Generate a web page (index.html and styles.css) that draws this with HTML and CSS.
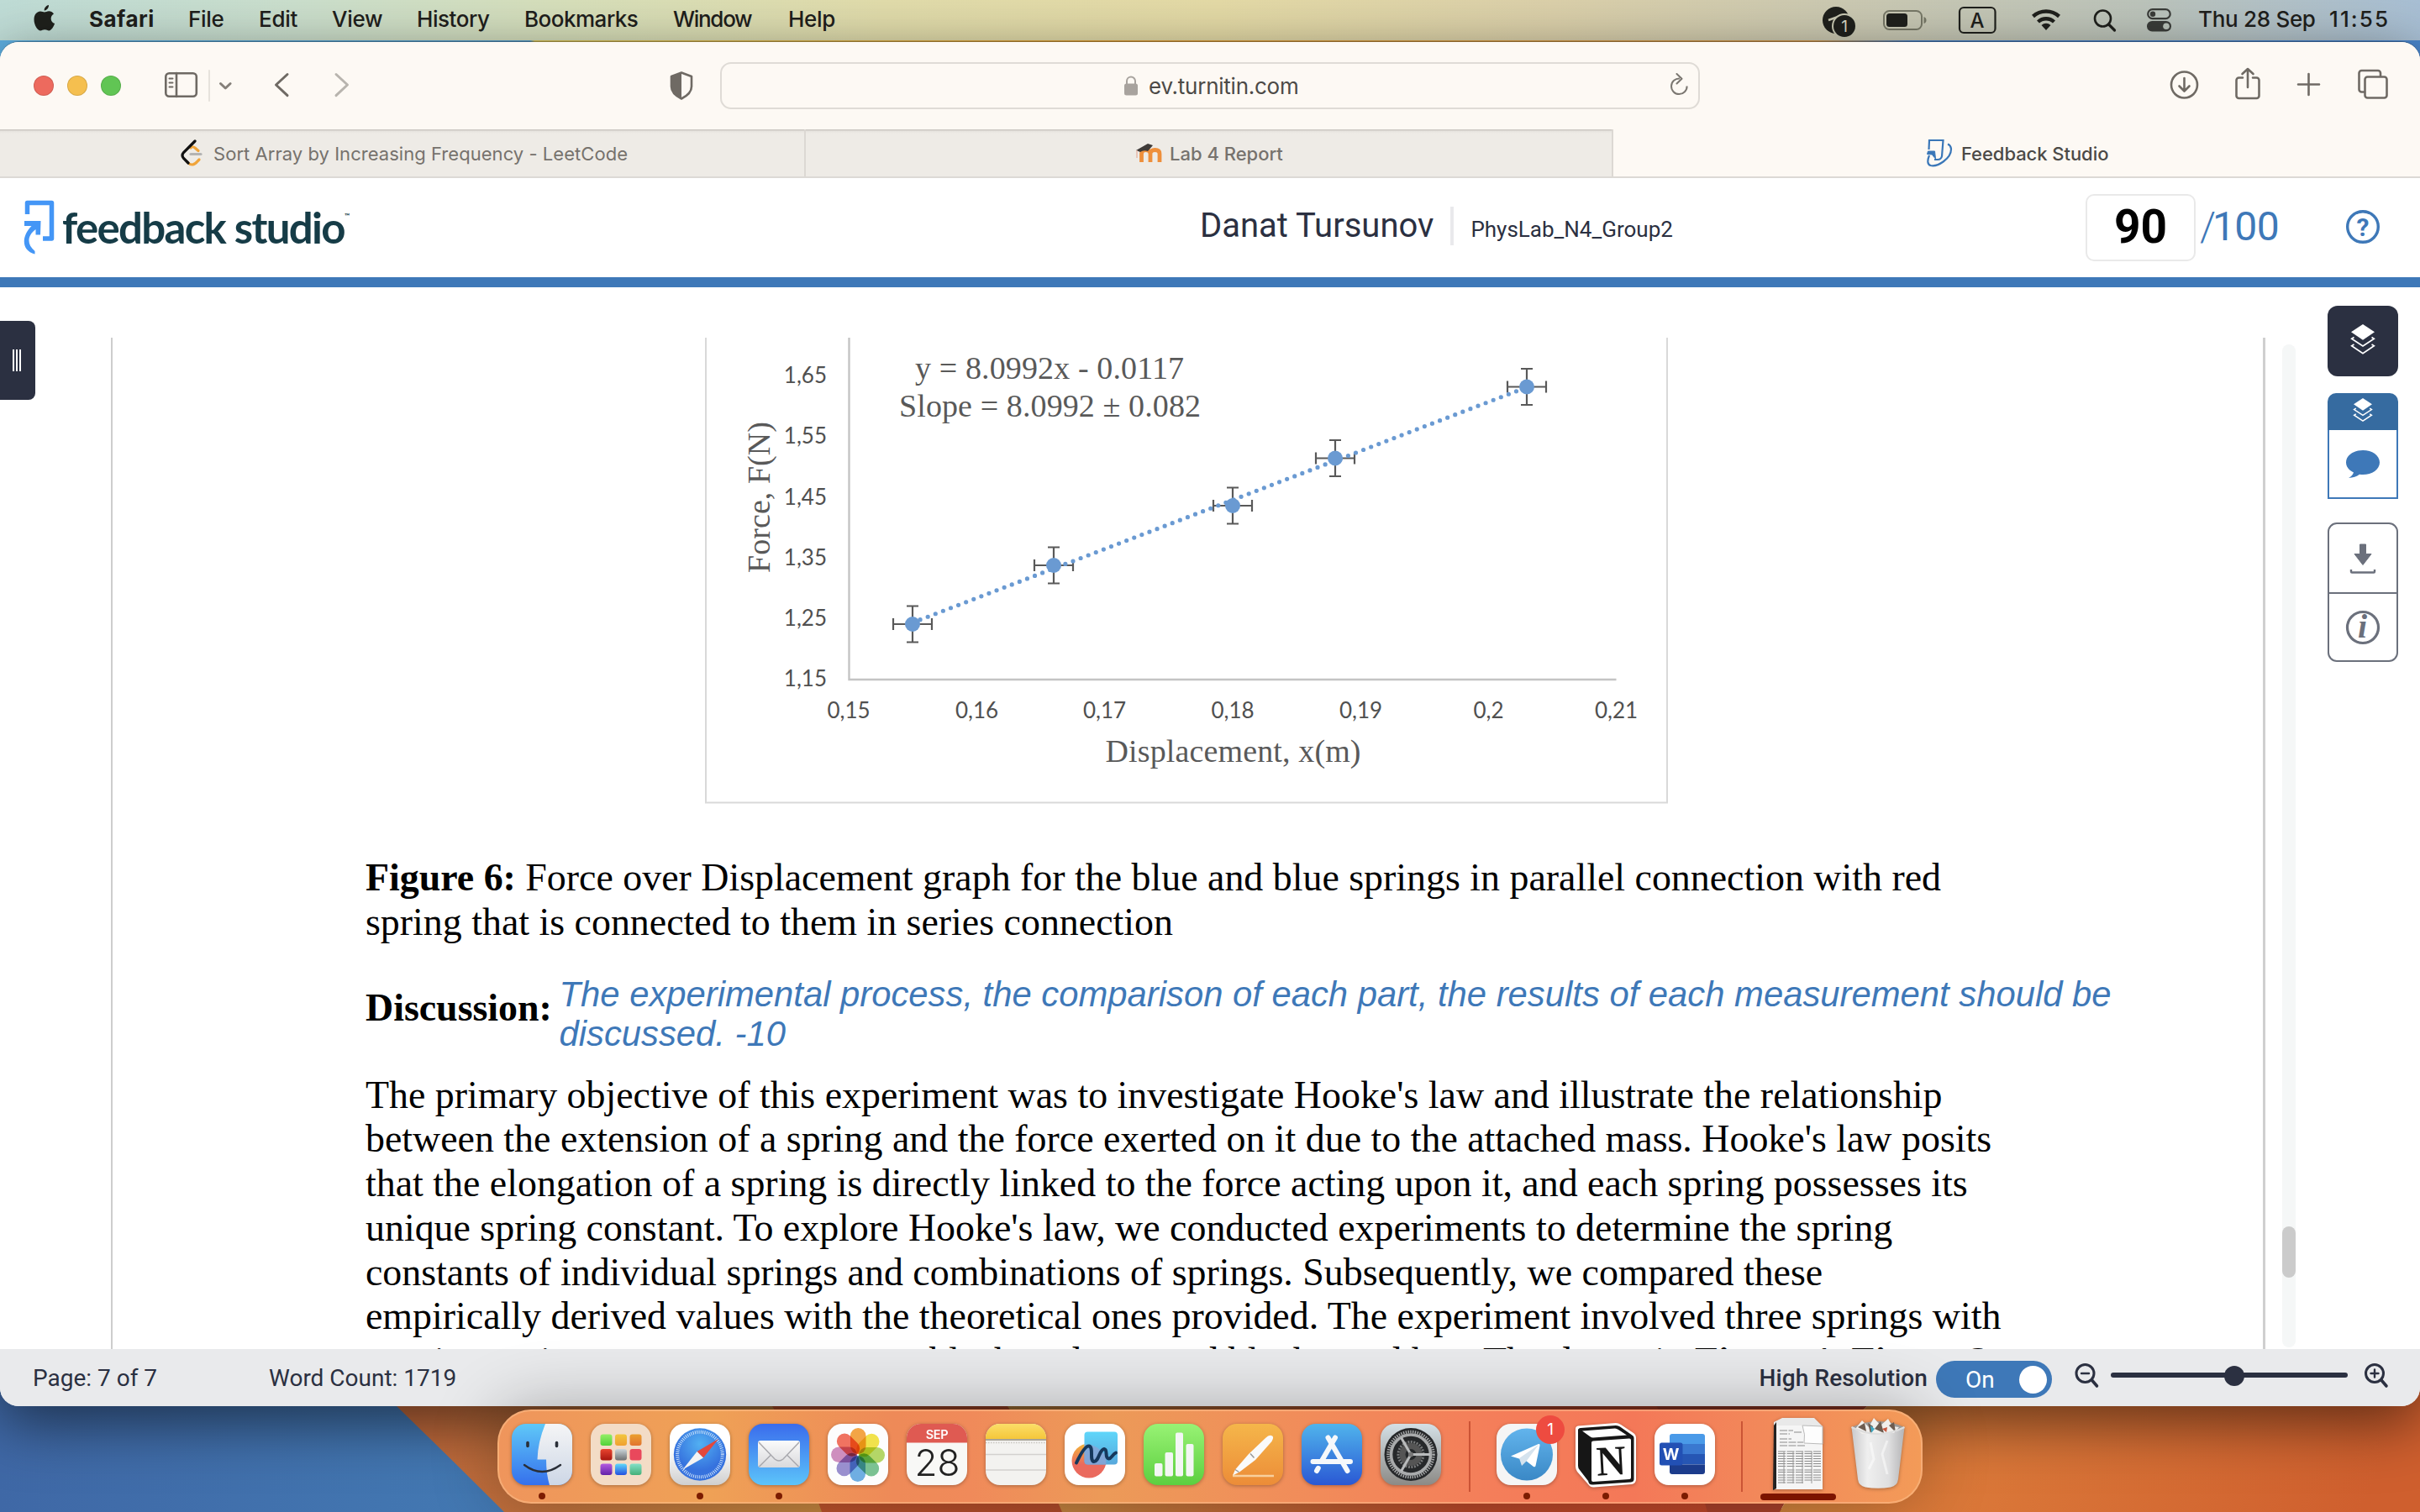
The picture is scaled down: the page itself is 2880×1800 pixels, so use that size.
FILE: index.html
```html
<!DOCTYPE html>
<html lang="en">
<head>
<meta charset="utf-8">
<title>Feedback Studio</title>
<link rel="stylesheet" href="styles.css">
</head>
<body>
<svg class="wallpaper" width="2880" height="1800" viewBox="0 0 2880 1800" aria-hidden="true">
  <defs>
    <linearGradient id="wTop" x1="0" x2="1"><stop offset="0" stop-color="#5fb0e2"/><stop offset=".219" stop-color="#5a9fcb"/><stop offset=".221" stop-color="#d8c45c"/><stop offset=".45" stop-color="#dfa23c"/><stop offset=".75" stop-color="#cf9850"/><stop offset=".79" stop-color="#4d83c4"/><stop offset="1" stop-color="#4a86cc"/></linearGradient>
    <linearGradient id="wBlue" x1="0" x2="1"><stop offset="0" stop-color="#3f68a6"/><stop offset="1" stop-color="#4379b3"/></linearGradient>
    <linearGradient id="wLeft" x1="0" x2="1"><stop offset="0" stop-color="#c26c44"/><stop offset=".45" stop-color="#c0693c"/><stop offset="1" stop-color="#c58d40"/></linearGradient>
    <linearGradient id="wMid" x1="0" x2="1"><stop offset="0" stop-color="#c0552c"/><stop offset="1" stop-color="#b04a2a"/></linearGradient>
    <linearGradient id="wMid2" x1="0" x2="1"><stop offset="0" stop-color="#c58b42"/><stop offset=".6" stop-color="#b9482a"/><stop offset="1" stop-color="#bf4629"/></linearGradient>
    <linearGradient id="wRight" x1="0" x2="1" y1="0" y2=".1"><stop offset="0" stop-color="#c8853c"/><stop offset=".3" stop-color="#dc7b3a"/><stop offset="1" stop-color="#cf5f2e"/></linearGradient>
  </defs>
  <rect width="2880" height="200" fill="url(#wTop)"/>
  <rect y="1600" width="1100" height="200" fill="url(#wLeft)"/>
  <path d="M0 1600H420L472 1674Q540 1740 600 1800H0Z" fill="url(#wBlue)"/>
  <path d="M910 1660Q950 1720 978 1800H1300V1660Z" fill="url(#wMid)"/>
  <path d="M1190 1660Q1230 1720 1264 1800H2120V1660Z" fill="url(#wMid2)"/>
  <path d="M1960 1660Q2010 1720 2032 1800H2118Q2160 1720 2240 1660Z" fill="#a8402a"/>
  <path d="M2240 1660Q2160 1720 2118 1800H2880V1600H2240Z" fill="url(#wRight)"/>
</svg>

<header class="menubar">
  <svg class="apple" width="26" height="32" viewBox="0 0 26 32"><path d="M18 0c.3 3-2.400 6.500-5.300 6.600C12.300 3.700 15 .5 18 0ZM12.900 8.600c1.200 0 3-1.300 5.400-1.300 2 0 4.200 1 5.700 3.200-5 3-4.100 9.700 1.100 11.600C24 25.300 21.300 30.500 18.300 30.500c-1.900 0-2.600-1.200-5-1.200s-3.300 1.200-5.100 1.200C4.500 30.500.5 23.600.5 17.300.5 11 4.400 7.600 8 7.600c2.200 0 3.800 1 4.900 1Z"/></svg>
  <nav class="menus">
    <span class="m-app">Safari</span><span class="m-file">File</span><span class="m-edit">Edit</span><span class="m-view">View</span><span class="m-hist">History</span><span class="m-book">Bookmarks</span><span class="m-wind">Window</span><span>Help</span>
  </nav>
  <svg class="status" width="420" height="48" viewBox="2165 0 420 48">
    <circle cx="2184" cy="24" r="16" fill="#1f201c"/><path d="M2175 24l17-6-4 9" fill="none" stroke="#c9c8b3" stroke-width="2.500"/>
    <circle cx="2194" cy="31" r="15" fill="#c9c9b3"/><circle cx="2194" cy="31" r="13" fill="#1f201c"/>
    <text x="2194" y="38" font-size="19" fill="#d9d8c4" text-anchor="middle">1</text>
    <rect x="2241" y="13" width="45" height="22" rx="6.500" fill="none" stroke="#777867" stroke-width="2"/><rect x="2244" y="16" width="25" height="16" rx="3.500" fill="#1f201c"/><path d="M2288.500 20q3 1 3 4t-3 4Z" fill="#777867"/>
    <rect x="2331" y="9" width="42.500" height="30" rx="5" fill="none" stroke="#1f201c" stroke-width="2.200"/><text x="2352" y="32.500" font-size="24" font-weight="500" fill="#1f201c" text-anchor="middle">A</text>
    <g fill="none" stroke="#1f201c" stroke-width="4.400"><path d="M2418.500 19.500a23 23 0 0 1 31 0"/><path d="M2424.500 26a14 14 0 0 1 19 0"/></g><path d="M2434 36l-5.500-6a8 8 0 0 1 11 0Z" fill="#1f201c"/>
    <circle cx="2501.500" cy="22" r="9.500" fill="none" stroke="#1f201c" stroke-width="2.600"/><path d="M2508.500 29l7 7" stroke="#1f201c" stroke-width="3.200" stroke-linecap="round"/>
    <rect x="2555.200" y="11.200" width="26.500" height="11" rx="5.500" fill="none" stroke="#3a3c39" stroke-width="2.200"/><circle cx="2561" cy="16.700" r="3.200" fill="#3a3c39"/><rect x="2554" y="25" width="29" height="12.500" rx="6.200" fill="#3a3c39"/><circle cx="2577" cy="31.200" r="3.800" fill="#b9c2b9"/>
  </svg>
  <span class="clock"><span class="date">Thu 28 Sep</span><span class="time">11:55</span></span>
</header>

<main class="window">
  <div class="toolbar">
    <span class="lights"><i class="red"></i><i class="amber"></i><i class="green"></i></span>
    <svg class="tools-left" width="222" height="56" viewBox="194 74 222 56" fill="none" stroke="#6f6a64" stroke-width="2.600" stroke-linecap="round" stroke-linejoin="round">
      <rect x="197.300" y="87.300" width="36.500" height="27.500" rx="4"/><path d="M210 87v28"/><path d="M201.500 93.500h4M201.500 98.500h4M201.500 103.500h4" stroke-width="2"/>
      <path d="M249 84v36" stroke="#e6e2dc" stroke-width="2"/><path d="M262.500 99.500l5.800 5.500 5.800-5.500" stroke="#85807a" stroke-width="3"/>
      <path d="M342 88.500l-13.500 12.500 13.500 12.700" stroke-width="3"/><path d="M400 88.500l13.500 12.500-13.500 12.700" stroke="#b8b4ae" stroke-width="3"/>
    </svg>
    <svg class="shield" width="28" height="34" viewBox="0 0 28 34"><path d="M14 1.500l12 4.500v12c0 6-5 11-12 14.500C7 29 2 24 2 18V6Z" fill="none" stroke="#6f6a64" stroke-width="2.600" stroke-linejoin="round"/><path d="M14 1.500v31C7 29 2 24 2 18V6Z" fill="#6f6a64"/></svg>
    <div class="address">
      <svg width="16" height="24" viewBox="0 0 16 24"><rect y="9.500" width="16" height="14" rx="2.500" fill="#a8a39e"/><path d="M3 10V6.500a5 5 0 0 1 10 0V10" fill="none" stroke="#a8a39e" stroke-width="2"/></svg>
      <span class="host">ev.turnitin.com</span>
      <svg class="reload" width="24" height="28" viewBox="0 0 24 28" fill="none" stroke="#7b7771" stroke-width="2"><path d="M13 6.500a9.300 9.300 0 1 0 8.600 9"/><path d="M9.500 1l6 5.700-6 5.800" stroke-linecap="round" stroke-linejoin="round"/></svg>
    </div>
    <svg class="tools-right" width="264" height="56" viewBox="2582 74 264 56" fill="none" stroke="#6f6a64" stroke-width="2.600" stroke-linecap="round" stroke-linejoin="round">
      <circle cx="2599.500" cy="101" r="15.500"/><path d="M2599.500 93v15M2593.500 102.500l6 6 6-6"/>
      <path d="M2669 92.500h-4.500a3 3 0 0 0-3 3v18.500a3 3 0 0 0 3 3h21a3 3 0 0 0 3-3V95.500a3 3 0 0 0-3-3h-4.500M2675 104V82.500M2668.500 88l6.500-6 6.500 6"/>
      <path d="M2735 100.500h25M2747.500 88v25"/>
      <path d="M2814 109.500h-3.500a3 3 0 0 1-3-3V87a3 3 0 0 1 3-3h19.500a3 3 0 0 1 3 3v3.500"/><rect x="2814.500" y="91.500" width="26" height="25" rx="3"/>
    </svg>
  </div>

  <div class="tabs">
    <div class="tab"><svg width="30" height="32" viewBox="0 0 30 32" fill="none" stroke-linecap="round" stroke-width="3.200"><path d="M13 10q2-2.500 5 0l4 3.500M9 27q6 6.500 12-1l2-2" stroke="#f0a43a"/><path d="M13 17.500h12" stroke="#b3b3b3"/><path d="M18 2L4.500 15.500q-3 3.500 0 7L10 28" stroke="#111"/></svg><span class="t-leet">Sort Array by Increasing Frequency - LeetCode</span></div>
    <div class="tab"><svg width="32" height="24" viewBox="0 0 32 24"><path d="M6.500 23V13q0-4.500 5-4.500T17 13v10M17 23V13q0-4.500 5.500-4.500T28 13v10" fill="none" stroke="#ee8f3b" stroke-width="4.800"/><path d="M0 9L14 1l6 2-6 7q-5-2-9 1Z" fill="#3f3b39"/><path d="M1 9v9" stroke="#e7b9a8" stroke-width="1.500"/></svg><span class="t-lab">Lab 4 Report</span></div>
    <div class="tab active"><svg width="32" height="34" viewBox="0 0 32 34" fill="none" stroke="#3a77b8" stroke-width="2.200"><path d="M3.500 13L4 2h16.500L19 21q-1 4-5 4h-4"/><path d="M2.500 15l8 0 1 9q-3-3-4-5l-6-.500Z" fill="#3a77b8" stroke-width="1"/><path d="M4 20q-4 10 1.500 12c8 2 25-8 24.500-20q-.5-4-4-5.500"/></svg><span class="t-feed">Feedback Studio</span></div>
  </div>

  <div class="appbar">
    <div class="brand">
      <svg width="40" height="66" viewBox="0 0 40 66"><path d="M5.500 17V3.500H34.500V46H24" fill="none" stroke="#4496f6" stroke-width="5.500" stroke-linejoin="round"/><path d="M2 25h19.500l-.5 16.500h-5.500V35C6 42 4 52 14.500 61v3.500C-2 60-1.500 43 10.500 31H2Z" fill="#4496f6"/></svg>
      <span class="word">feedback studio</span><span class="tm">™</span>
    </div>
    <div class="paper"><span class="author">Danat Tursunov</span><i></i><span class="title">PhysLab_N4_Group2</span></div>
    <div class="grade"><span class="score">90</span><span class="outof"><b>/</b>100</span></div>
    <svg class="help" width="42" height="42" viewBox="0 0 42 42"><circle cx="21" cy="21" r="18.300" fill="none" stroke="#3e78b8" stroke-width="3.400"/><text x="21" y="31.500" text-anchor="middle" font-size="30" font-weight="700">?</text></svg>
  </div>

  <div class="viewer">
    <div class="handle"><i></i><i></i><i></i></div>
    <article class="page">
      <svg class="chart" width="1148" height="555" viewBox="838 402 1148 555">
        <path d="M840 402V955.500H1984V402" fill="none" stroke="#d9d9d9" stroke-width="2"/>
        <path d="M1010.500 402V809H1923.500" fill="none" stroke="#c4c4c4" stroke-width="2.400"/>
        <g class="ticks" text-anchor="end"><text x="984" y="456">1,65</text><text x="984" y="528">1,55</text><text x="984" y="600.500">1,45</text><text x="984" y="672.500">1,35</text><text x="984" y="745">1,25</text><text x="984" y="817">1,15</text></g>
        <g class="ticks" text-anchor="middle"><text x="1010" y="854.500">0,15</text><text x="1162.500" y="854.500">0,16</text><text x="1314.500" y="854.500">0,17</text><text x="1467" y="854.500">0,18</text><text x="1619.500" y="854.500">0,19</text><text x="1771.500" y="854.500">0,2</text><text x="1923.500" y="854.500">0,21</text></g>
        <g class="labels"><text x="1089" y="450.500" textLength="320">y = 8.0992x - 0.0117</text><text x="1070" y="495.500" textLength="359">Slope = 8.0992 ± 0.082</text><text x="1315.500" y="907" textLength="304">Displacement, x(m)</text><text transform="translate(916 682) rotate(-90)" textLength="180">Force, F(N)</text></g>
        <g stroke="#595959" stroke-width="2.200" fill="none">
          <path d="M1063 743h46M1086 721.500v43M1063 736v14M1109 736v14M1079 721.500h14M1079 764.500h14"/>
          <path d="M1231 673h46M1254 651.500v43M1231 666v14M1277 666v14M1247 651.500h14M1247 694.500h14"/>
          <path d="M1444 602h46M1467 580.500v43M1444 595v14M1490 595v14M1460 580.500h14M1460 623.500h14"/>
          <path d="M1566 545.500h46M1589 524v43M1566 538.500v14M1612 538.500v14M1582 524h14M1582 567h14"/>
          <path d="M1794 460.500h46M1817 439v43M1794 453.500v14M1840 453.500v14M1810 439h14M1810 482h14"/>
        </g>
        <path d="M1086 741.200L1816.700 461.100" stroke="#6a9ad2" stroke-width="5.200" stroke-linecap="round" stroke-dasharray="0 9.740"/>
        <g fill="#6a9ad2"><circle cx="1086" cy="743" r="9"/><circle cx="1254" cy="673" r="9"/><circle cx="1467" cy="602" r="9"/><circle cx="1589" cy="545.500" r="9"/><circle cx="1817" cy="460.500" r="9"/></g>
      </svg>
      <p class="caption"><b>Figure 6:</b> Force over Displacement graph for the blue and blue springs in parallel connection with red<br>spring that is connected to them in series connection</p>
      <div class="discussion"><b>Discussion:</b><p class="comment">The experimental process, the comparison of each part, the results of each measurement should be<br>discussed. -10</p></div>
      <p class="prose">The primary objective of this experiment was to investigate Hooke's law and illustrate the relationship<br>between the extension of a spring and the force exerted on it due to the attached mass. Hooke's law posits<br>that the elongation of a spring is directly linked to the force acting upon it, and each spring possesses its<br>unique spring constant. To explore Hooke's law, we conducted experiments to determine the spring<br>constants of individual springs and combinations of springs. Subsequently, we compared these<br>empirically derived values with the theoretical ones provided. The experiment involved three springs with</p>
      <div class="lastline"><span>varying spring constants,</span><span>black, red</span><span>and black, used here.</span><span>The data</span><span>in</span><b>Figure 1, Figure 2</b></div>
    </article>
    <div class="scroll"><i></i></div>
    <aside class="rail">
      <div class="layers"><svg width="30" height="37" viewBox="-1 0 30 37"><path d="M14 0L28 9.300 14 18.700 0 9.300Z" fill="#fff"/><path d="M3.500 15.500L.7 17.300 14 26l13.300-8.700-2.800-1.800M3.500 24L.7 25.800 14 34.700l13.300-8.900L24.500 24" fill="none" stroke="#fff" stroke-width="1.700"/></svg></div>
      <div class="feedback">
        <div class="feedback-top"><svg width="24" height="29" viewBox="-1 0 30 37"><path d="M14 0L28 9.300 14 18.700 0 9.300Z" fill="#fff"/><path d="M3.500 15.500L.7 17.300 14 26l13.300-8.700-2.800-1.800M3.500 24L.7 25.800 14 34.700l13.300-8.900L24.500 24" fill="none" stroke="#fff" stroke-width="1.900"/></svg></div>
        <div class="feedback-body"><svg width="40" height="33" viewBox="0 0 40 33"><path d="M20 0C31 0 40 6 40 14.500S31 29 20 29q-2 0-4-.3Q11 32.500 3 33q4.500-2.500 6-6.500C3.500 24 0 19.500 0 14.500 0 6 9 0 20 0Z" fill="#3e78b8"/></svg></div>
      </div>
      <div class="tools">
        <div><svg width="32" height="36" viewBox="0 0 32 36"><path d="M12.500 1h7v11.500H26L16 25.500 6 12.500h6.500Z" fill="#6b707c" stroke="#6b707c" stroke-width="1" stroke-linejoin="round"/><path d="M2 31v2.500q0 1 1 1h26q1 0 1-1V31" fill="none" stroke="#6b707c" stroke-width="2.400"/></svg></div>
        <div><svg width="42" height="42" viewBox="0 0 42 42"><circle cx="21" cy="21" r="18.500" fill="none" stroke="#6b707c" stroke-width="3.200"/><text class="info" x="20.500" y="32.500" text-anchor="middle">i</text></svg></div>
      </div>
    </aside>
  </div>

  <footer class="statusbar">
    <span class="pageno">Page: 7 of 7</span><span class="words">Word Count: 1719</span>
    <b class="hires">High Resolution</b>
    <span class="toggle">On<i></i></span>
    <svg class="zoom" width="372" height="44" viewBox="2466 1618 372 44" fill="none" stroke="#2b3041" stroke-linecap="round">
      <g stroke-width="3"><circle cx="2481.500" cy="1635" r="10.500"/><path d="M2489.500 1643l6 7" stroke-width="3.600"/><path d="M2477 1635h9" stroke-width="2.400"/><circle cx="2826" cy="1635" r="10.500"/><path d="M2834 1643l6 7" stroke-width="3.600"/><path d="M2821.500 1635h9M2826 1630.500v9" stroke-width="2.400"/></g>
      <path d="M2515 1637H2791" stroke-width="6"/><circle cx="2659" cy="1638" r="12" fill="#2b3041" stroke="none"/>
    </svg>
  </footer>
</main>

<div class="dock">
  <div class="app on"><svg width="72" height="73" viewBox="0 0 72 73"><defs><clipPath id="sq"><rect width="72" height="73" rx="17"/></clipPath><linearGradient id="g1" x2="0" y2="1"><stop stop-color="#5fc8f8"/><stop offset="1" stop-color="#3570ec"/></linearGradient><linearGradient id="g2" x2="0" y2="1"><stop stop-color="#f5f5f6"/><stop offset="1" stop-color="#cdd7e6"/></linearGradient></defs><g clip-path="url(#sq)"><rect width="72" height="73" fill="url(#g1)"/><path d="M40 0Q31 22 30.500 42.500H41Q41 60 45 73H72V0Z" fill="url(#g2)"/></g><g fill="none" stroke="#2a2f38" stroke-linecap="round"><path d="M19 22.500v4M53.500 22.500v4" stroke-width="3.600"/><path d="M15 49q21 16 43 0" stroke-width="2.400"/></g></svg></div>
  <div class="app"><svg width="72" height="73" viewBox="0 0 72 73"><defs><linearGradient id="l1" x2="0" y2="1"><stop stop-color="#94ee66"/><stop offset="1" stop-color="#53d23a"/></linearGradient><linearGradient id="l2" x2="0" y2="1"><stop stop-color="#f2c63f"/><stop offset="1" stop-color="#f0a02f"/></linearGradient><linearGradient id="l3" x2="0" y2="1"><stop stop-color="#eba02f"/><stop offset="1" stop-color="#e2742f"/></linearGradient><linearGradient id="l4" x2="0" y2="1"><stop stop-color="#e8452f"/><stop offset="1" stop-color="#a8160f"/></linearGradient><linearGradient id="l5" x2="0" y2="1"><stop stop-color="#ccd6da"/><stop offset="1" stop-color="#6d6f70"/></linearGradient><linearGradient id="l7" x2="0" y2="1"><stop stop-color="#b45be0"/><stop offset="1" stop-color="#6222a8"/></linearGradient><linearGradient id="l8" x2="0" y2="1"><stop stop-color="#5fd8fa"/><stop offset="1" stop-color="#2450e0"/></linearGradient><linearGradient id="l9" x2="0" y2="1"><stop stop-color="#83e0c8"/><stop offset="1" stop-color="#44b078"/></linearGradient></defs><rect width="72" height="73" rx="17" fill="#f3dcc6"/><rect x="11.500" y="12.500" width="14" height="13.500" rx="3" fill="url(#l1)"/><rect x="29" y="12.500" width="14" height="13.500" rx="3" fill="url(#l2)"/><rect x="46.500" y="12.500" width="14" height="13.500" rx="3" fill="url(#l3)"/><rect x="11.500" y="30" width="14" height="13.500" rx="3" fill="url(#l4)"/><rect x="29" y="30" width="14" height="13.500" rx="3" fill="url(#l5)"/><rect x="46.500" y="30" width="14" height="13.500" rx="3" fill="#e9485c"/><rect x="11.500" y="47.500" width="14" height="13.500" rx="3" fill="url(#l7)"/><rect x="29" y="47.500" width="14" height="13.500" rx="3" fill="url(#l8)"/><rect x="46.500" y="47.500" width="14" height="13.500" rx="3" fill="url(#l9)"/></svg></div>
  <div class="app on"><svg width="72" height="73" viewBox="0 0 72 73"><defs><linearGradient id="s0" x2="0" y2="1"><stop offset=".4" stop-color="#fff"/><stop offset="1" stop-color="#cfcfcf"/></linearGradient><radialGradient id="s1" cy=".3"><stop stop-color="#52b0f2"/><stop offset="1" stop-color="#3672de"/></radialGradient></defs><rect width="72" height="73" rx="17" fill="url(#s0)"/><circle cx="36" cy="36.500" r="31.200" fill="url(#s1)"/><circle cx="36" cy="36.500" r="26.800" fill="none" stroke="#d5e8fb" stroke-width="4" stroke-dasharray=".9 1.440"/><path d="M58 18L40 40.500 32.500 33Z" fill="#e3483c"/><path d="M15.500 54.500L40 40.500 32.500 33Z" fill="#f3f3f3"/></svg></div>
  <div class="app on"><svg width="72" height="73" viewBox="0 0 72 73"><defs><linearGradient id="m0" x2="0" y2="1"><stop stop-color="#3a6cec"/><stop offset="1" stop-color="#5cc4fa"/></linearGradient><linearGradient id="m1" x2="0" y2="1"><stop stop-color="#fbfbfb"/><stop offset="1" stop-color="#d9d9dc"/></linearGradient></defs><rect width="72" height="73" rx="17" fill="url(#m0)"/><rect x="11" y="20" width="50" height="32" rx="3" fill="url(#m1)"/><path d="M12 22L31 42q5 4 10 0L60 22M12.500 51L26.500 37M59.500 51L45.500 37" fill="none" stroke="#a9a9ae" stroke-width="1.500"/></svg></div>
  <div class="app"><svg width="72" height="73" viewBox="0 0 72 73"><rect width="72" height="73" rx="17" fill="#fdfdfd"/><g class="petals"><rect x="27" y="5" width="18.500" height="31" rx="9.250" fill="#f5a646"/><rect x="27" y="5" width="18.500" height="31" rx="9.250" fill="#f3e44c" transform="rotate(45 36 37)"/><rect x="27" y="5" width="18.500" height="31" rx="9.250" fill="#b6d868" transform="rotate(90 36 37)"/><rect x="27" y="5" width="18.500" height="31" rx="9.250" fill="#7cc494" transform="rotate(135 36 37)"/><rect x="27" y="5" width="18.500" height="31" rx="9.250" fill="#70b0e4" transform="rotate(180 36 37)"/><rect x="27" y="5" width="18.500" height="31" rx="9.250" fill="#9a90d0" transform="rotate(225 36 37)"/><rect x="27" y="5" width="18.500" height="31" rx="9.250" fill="#d090c0" transform="rotate(270 36 37)"/><rect x="27" y="5" width="18.500" height="31" rx="9.250" fill="#f27462" transform="rotate(315 36 37)"/></g></svg></div>
  <div class="app"><svg width="72" height="73" viewBox="0 0 72 73"><g clip-path="url(#sq)"><rect width="72" height="73" fill="#f8f8f6"/><rect width="72" height="22.500" fill="#df5a52"/></g><text x="36" y="17.500" text-anchor="middle" font-size="14.500" font-weight="600" fill="#fff" letter-spacing="-.3">SEP</text><text x="36.500" y="62" text-anchor="middle" font-size="44" font-weight="300" fill="#222">28</text></svg></div>
  <div class="app"><svg width="72" height="73" viewBox="0 0 72 73"><defs><linearGradient id="n0" x2="0" y2="1"><stop stop-color="#fbde68"/><stop offset="1" stop-color="#f5c63a"/></linearGradient></defs><g clip-path="url(#sq)"><rect width="72" height="73" fill="#f3f2f0"/><rect width="72" height="18" fill="url(#n0)"/><path d="M0 19h72" stroke="#a8a498" stroke-width="2"/><path d="M0 22.500h72" stroke="#c9c6c0" stroke-width="1.500" stroke-dasharray="1.500 1.500"/><path d="M0 36.500h72M0 55h72" stroke="#d3d1ce" stroke-width="1.500"/></g></svg></div>
  <div class="app"><svg width="72" height="73" viewBox="0 0 72 73"><defs><linearGradient id="f0" x2="0" y2="1"><stop stop-color="#f3b53a"/><stop offset=".6" stop-color="#ea6a5e"/></linearGradient><linearGradient id="f1" x2="0" y2="1"><stop stop-color="#5fd6fa"/><stop offset="1" stop-color="#58a8dc"/></linearGradient></defs><rect width="72" height="73" rx="17" fill="#fff"/><circle cx="29" cy="44" r="20.500" fill="url(#f0)"/><rect x="23.500" y="9.500" width="39.500" height="39" rx="4" fill="url(#f1)"/><path d="M23.500 25q14-2 25.500 13l.5 10.500H27.500q-4 0-4-4Z" fill="#8ba4d4" opacity=".8"/><path d="M14 46.500C18 38 24 26 29 26.500c6 1 0 18 6 18.500 6 0 6-14.500 12-15 5 .5 0 11 5.500 11.500 3.500 0 4-5 8.500-7" fill="none" stroke="#16385c" stroke-width="4" stroke-linecap="round"/></svg></div>
  <div class="app"><svg width="72" height="73" viewBox="0 0 72 73"><defs><linearGradient id="b0" x2="0" y2="1"><stop stop-color="#98f274"/><stop offset="1" stop-color="#5ccf40"/></linearGradient></defs><rect width="72" height="73" rx="17" fill="url(#b0)"/><g fill="#f3f6f4"><rect x="13" y="47" width="9.500" height="15.500" rx="2"/><rect x="25.500" y="34" width="9.500" height="28.500" rx="2"/><rect x="38" y="10.500" width="9" height="52" rx="2"/><rect x="50.500" y="24" width="9" height="38.500" rx="2"/></g></svg></div>
  <div class="app"><svg width="72" height="73" viewBox="0 0 72 73"><defs><linearGradient id="p0" x2="0" y2="1"><stop stop-color="#f5b64a"/><stop offset="1" stop-color="#ec8c38"/></linearGradient></defs><rect width="72" height="73" rx="17" fill="url(#p0)"/><path d="M12 62h49" stroke="#f8cf9c" stroke-width="2.400"/><path d="M58 14q4 1 .5 7L39 43 20 57.500l-8 4 3-7L31 36 51 17q4-4 7-3Z" fill="#fafafa"/><path d="M33 35.500l4.500 5M15 54.500l4.500 3" stroke="#999" stroke-width="1.500"/></svg></div>
  <div class="app"><svg width="72" height="73" viewBox="0 0 72 73"><defs><linearGradient id="a0" x2="0" y2="1"><stop stop-color="#50b4ec"/><stop offset="1" stop-color="#2a58d4"/></linearGradient></defs><rect width="72" height="73" rx="17" fill="url(#a0)"/><g stroke="#f5f8fb" stroke-width="6" stroke-linecap="round"><path d="M13.500 45h44.500M31.500 16.500L54.500 56M18 56l1.800-3.200"/><path d="M40 16.500L24 44"/></g></svg></div>
  <div class="app last"><svg width="72" height="73" viewBox="0 0 72 73"><defs><linearGradient id="c0" x2="0" y2="1"><stop stop-color="#d4e0e6"/><stop offset="1" stop-color="#8c8a86"/></linearGradient></defs><rect width="72" height="73" rx="17" fill="url(#c0)"/><circle cx="36" cy="36.500" r="31.500" fill="#26282a"/><g fill="none" stroke="#a9abac"><circle cx="36" cy="36.500" r="27" stroke-width="3.500" stroke-dasharray="1.400 1.400"/><circle cx="36" cy="36.500" r="23.500" stroke-width="3.600"/><circle cx="36" cy="36.500" r="15" stroke-width="3" stroke="#77797a" stroke-dasharray="2 1.500"/><circle cx="36" cy="36.500" r="10" stroke="#555" stroke-width="7"/><path d="M36 36.500H59M36 36.500L24.500 16.500M36 36.500L24.500 56.500" stroke-width="3" stroke="#b9bbbc"/></g><circle cx="36" cy="36.500" r="3" fill="#777"/></svg></div>
  <i class="rule"></i>
  <div class="app on tele"><svg width="72" height="73" viewBox="0 0 72 73"><defs><linearGradient id="t0" x2="0" y2="1"><stop stop-color="#62b4ec"/><stop offset="1" stop-color="#3a88c6"/></linearGradient></defs><rect width="72" height="73" rx="17" fill="#f5f5f5"/><circle cx="36" cy="36.500" r="31" fill="url(#t0)"/><path d="M17 38.500L50 24q2-.5 1.500 2L46.500 50q-.5 2-2.500 1L35 44Z" fill="#fff"/><path d="M27 41l3 9 5.500-5.500L50 25Z" fill="#d5e3ee"/></svg><span class="badge">1</span></div>
  <div class="app on"><svg width="76" height="80" viewBox="-2 -3 76 80"><path d="M0 6Q0 3 3 2.500L48-1Q51-1 54 1L69 11Q72 13 72 17V66Q72 71 67 72L22 75.500Q18 76 15 72L2 57Q0 54 0 51Z" fill="#fff"/><path d="M3 8L15 19V68L5 55Q3 53 3 50Z" fill="#161616"/><path d="M3 7.500Q3 5.500 6 5L48 2Q51 2 53 3.500L68 14Q69.500 15 69.500 17V66Q69.500 69 66 69.500L21 72.500Q15 73 15 67V20L3 9Z" fill="#161616"/><path d="M8 8.500L47 5.500Q49 5.500 51 7L61 13.500 21 16.500Q19 16.500 17 15Z" fill="#fff"/><path d="M19 22.500Q19 20.500 21 20.500L64 17.500Q66 17.500 66 19.500V64Q66 66 64 66L21 69Q19 69 19 67Z" fill="#fff"/><text class="n-letter" x="42.500" y="61" text-anchor="middle" textLength="35" lengthAdjust="spacingAndGlyphs" transform="rotate(-3 42 45)">N</text></svg></div>
  <div class="app on word-app"><svg width="72" height="73" viewBox="0 0 72 73"><rect width="72" height="73" rx="17" fill="#fff"/><path d="M18 15q0-3 3-3H57q3 0 3 3v9H18Z" fill="#4a9ae8"/><path d="M18 24H60v12H18Z" fill="#3a78d0"/><path d="M18 36H60v12.500H18Z" fill="#2656b4"/><path d="M18 48.500H60V57q0 3-3 3H21q-3 0-3-3Z" fill="#1c3c8c"/><rect x="6" y="22.500" width="27.500" height="27" rx="2.500" fill="#2250b4"/><text x="19.700" y="43" font-size="19" font-weight="700" fill="#fff" text-anchor="middle">W</text></svg></div>
  <i class="rule r2"></i>
  <div class="app docs"><svg width="62" height="86" viewBox="0 0 62 86"><path d="M2 5L12 0H50L60 10V85H2Z" fill="#e9e9e9"/><path d="M2 9L5 5V84L1 86Z" fill="#222"/><path d="M5 9H38L60 30V85H5Z" fill="#f5f5f5"/><path d="M36 9Q40 20 38 30l22 1V10Z" fill="#fdfdfd" stroke="#bbb" stroke-width="1"/><g stroke="#8c8c8c" stroke-width="1.200" stroke-dasharray="9 1.500"><path d="M9 15h16M9 19h12M26 17h9M9 25h14M9 29h28M9 33h30M7 40h51M7 42.500h51M7 45.500h51M7 48.500h51M7 51.500h51M7 54.500h51M7 57.500h51M7 62h51M7 64.500h51M7 68h51M7 71h51M7 74h51M7 77h30"/></g><path d="M14 40v38M25 40v38M36 40v38M47 40v38" stroke="#999" stroke-width="1"/></svg></div>
  <div class="app trash"><svg width="66" height="86" viewBox="0 0 66 86"><defs><linearGradient id="k0"><stop stop-color="#c9c9cb"/><stop offset=".3" stop-color="#efefef"/><stop offset=".7" stop-color="#dfdfe0"/><stop offset="1" stop-color="#b4b4b6"/></linearGradient></defs><path d="M2 12Q33-2 64 12L62 20H4Z" fill="#9c9a98"/><path d="M1.500 12Q33 28 64.500 12L57 74Q56 82 48 83.500 33 86 18 83.500 10 82 9 74Z" fill="url(#k0)"/><path d="M6 14L14 4l8 8 6-11 8 9L45 2l5 9 8 1-6 7-38 1Z" fill="#f1efec"/><path d="M9 12l8-5 2 10ZM29 14l7-9 4 14ZM46 10l6-4 2 12ZM21 7l6 4-3 9Z" fill="#6d5c50"/><path d="M24 10l5 4-4 5Z" fill="#3fa8c4"/><path d="M38 14l6-2-1 6Z" fill="#c8573e"/><path d="M1.500 12Q33 28 64.500 12" fill="none" stroke="#ddd" stroke-width="2"/><path d="M24 30l4 20-6 12M44 28l-6 16 6 24" stroke="#fff" stroke-width="3" opacity=".5" fill="none"/></svg></div>
</div>
</body>
</html>
```
FILE: styles.css
```css
* { box-sizing: border-box; }
body { margin: 0; width: 2880px; height: 1800px; overflow: hidden; position: relative; font-family: Inter, "Liberation Sans", sans-serif; display: flex; flex-direction: column; }
p { margin: 0; }
svg { flex: none; display: block; }
svg text { font-family: Inter, sans-serif; }
.wallpaper { position: absolute; inset: 0; z-index: -1; }

/* menu bar */
.menubar { height: 48px; flex: none; display: flex; align-items: center; padding: 0 37px 2px 40px; color: #1f201c; font-size: 26px; line-height: 46px; white-space: pre;
  background: linear-gradient(90deg, #bfdcd6 0, #cbdfcd 350px, #d7dfba 680px, #e1dcab 1050px, #e4daa6 1450px, #dbd0aa 1850px, #cbc9b2 2200px, #bcc4bb 2550px, #a8bfd4 2880px); }
.apple { fill: #1f201c; margin-top: -3px; }
.menus { display: flex; font-weight: 500; margin-left: 40px; }
.menus span { flex: none; letter-spacing: -.3px; }
.menus .m-app { width: 118px; font-weight: 700; letter-spacing: .5px; }
.menus .m-file { width: 84px; }
.menus .m-edit { width: 87px; }
.menus .m-view { width: 101px; }
.menus .m-hist { width: 128px; letter-spacing: -.45px; }
.menus .m-book { width: 177px; letter-spacing: -.5px; }
.menus .m-wind { width: 137px; letter-spacing: -1.3px; }
.status { margin-left: auto; margin-right: 30px; margin-bottom: -2px; }
.clock { font-weight: 500; display: flex; gap: 17px; }
.date { letter-spacing: -.3px; width: 139px; }
.time { letter-spacing: 2.100px; width: 71px; }

/* browser window */
.window { height: 1624px; margin-top: 2px; flex: none; display: flex; flex-direction: column; border-radius: 22px; overflow: hidden; background: #fff; box-shadow: 0 -1px 0 rgba(0,0,0,.25), 0 20px 70px rgba(0,0,0,.55); }
.toolbar { height: 104px; flex: none; background: #fdf9f4; display: flex; align-items: center; padding: 0 34px 0 40px; }
.lights { display: flex; gap: 16px; margin-right: 50px; }
.lights i { width: 24px; height: 24px; border-radius: 50%; border: 1px solid rgba(0,0,0,.12); }
.red { background: #ed6a5e; } .amber { background: #f5bf4f; } .green { background: #61c554; }
.shield { margin-left: 381px; }
.address { width: 1166px; height: 56px; margin-left: 32px; border: 2px solid #dfdbd6; border-radius: 13px; display: flex; align-items: center; position: relative; color: #4c4a47; font-size: 26px; }
.address svg:first-child { margin-left: 479px; }
.host { margin-left: 13px; letter-spacing: -.25px; }
.reload { margin-left: auto; margin-right: 11px; margin-top: -2px; }
.tools-right { margin-left: auto; }
.tabs { height: 58px; flex: none; display: grid; grid-template-columns: 959px 961px 960px; border-bottom: 2px solid #dcd9d5; font-size: 22px; color: #76726d; }
.tab { display: flex; align-items: center; background: linear-gradient(#ccc8c3 0 1px, #e6e3de 2px, #eeebe6 5px); border-right: 2px solid #dcd8d3; padding-left: 214px; }
.tab span { white-space: nowrap; padding-top: 1px; }
.tab:nth-child(2) { padding-left: 393px; font-weight: 500; }
.tab.active { background: #fdf9f4; color: #4c4a47; border: 0; padding-left: 372px; font-weight: 500; }
.t-leet { letter-spacing: .04px; margin-left: 10px; } .t-lab { margin-left: 8px; } .t-feed { margin-left: 10px; letter-spacing: -.05px; }

.appbar { height: 130px; flex: none; border-bottom: 12px solid #3e78b8; display: flex; align-items: center; color: #2b3041; font-family: Roboto, sans-serif; }
.brand { display: flex; width: 1428px; padding-left: 27px; }
.word { font: 700 51px/65px Lato, sans-serif; letter-spacing: -1.700px; color: #163c47; margin-left: 7px; white-space: nowrap; }
.tm { font: 700 8px/38px Lato, sans-serif; color: #163c47; }
.paper { display: flex; align-items: center; width: 1054px; }
.author { font-size: 40px; letter-spacing: 0; margin-top: -5px; }
.paper i { width: 4px; height: 46px; background: #e9e9ec; margin: -4px 20px 0 20px; }
.title { font-size: 26px; margin-top: 3px; letter-spacing: 0; }
.grade { display: flex; align-items: center; margin-top: -1px; }
.score { width: 131px; height: 80px; border: 2px solid #e9e9e9; border-radius: 10px; font: 700 55px/75px Roboto, sans-serif; color: #000; text-align: center; }
.outof { font-size: 48px; font-weight: 400; color: #3e78b8; margin-left: 5px; letter-spacing: -.7px; margin-top: -2px; width: 96px; }
.outof b { font-weight: 300; letter-spacing: -4px; }
.help { margin-left: 77px; margin-top: -2px; }
.help text { font-family: Roboto, sans-serif; fill: #3e78b8; }

.viewer { flex: 1; min-height: 0; display: flex; align-items: flex-start; overflow: hidden; }
.handle { width: 42px; height: 94px; margin-top: 40px; background: #2b3041; border-radius: 0 8px 8px 0; display: flex; align-items: center; gap: 2px; padding-left: 15px; }
.handle i { width: 2px; height: 26px; background: #fff; }
.page { width: 2564px; height: 1204px; margin: 60px 0 0 90px; border-left: 2px solid #cdcdcd; border-right: 3px solid #cfcfcf; padding-left: 301px; overflow: hidden; font: 45.900px/52.800px "Liberation Serif", serif; color: #000; white-space: nowrap; }
.chart { margin-left: 403px; }
.ticks text { font-family: Lato, sans-serif; font-size: 26px; fill: #505050; }
.labels text { font-family: "Liberation Serif", serif; font-size: 38px; fill: #595959; }
.caption { margin-top: 62px; }
.discussion { display: flex; margin-top: 35px; align-items: flex-start; }
.discussion b { margin-top: 14.500px; width: 230.500px; }
.comment { font: italic 41.800px/47.700px "Liberation Sans", sans-serif; color: #3e78b8; }
.prose { margin-top: 22.500px; }
.lastline { display: flex; padding-top: 1px; }
.lastline span:nth-child(1) { width: 671px; } .lastline span:nth-child(2) { width: 278px; } .lastline span:nth-child(3) { width: 381px; }
.lastline span:nth-child(4) { width: 204px; } .lastline span:nth-child(5) { width: 48px; }
.scroll { width: 16px; height: 1194px; margin: 68px 0 0 20px; background: #f5f7f7; border-radius: 8px; }
.scroll i { display: block; width: 16px; height: 61px; margin-top: 1050px; border-radius: 8px; background: #cbcbcb; }
.rail { width: 84px; margin: 22px 0 0 38px; display: flex; flex-direction: column; }
.layers { height: 84px; border-radius: 12px; background: #2b3041; display: flex; align-items: center; justify-content: center; padding-bottom: 4px; }
.feedback { margin-top: 20px; }
.feedback-top { height: 44px; background: #366ba0; border-radius: 10px 10px 0 0; display: flex; justify-content: center; padding-top: 6px; }
.feedback-body { height: 82px; border: 2px solid #3e78b8; border-top: 0; display: flex; align-items: center; justify-content: center; }
.tools { margin-top: 28px; height: 166px; border: 2px solid #6b707c; border-radius: 11px; }
.tools div { height: 81px; display: flex; align-items: center; justify-content: center; }
.tools div + div { border-top: 2px solid #6b707c; }
.info { font: italic 700 40px "Liberation Serif", serif !important; fill: #6b707c; }

.statusbar { height: 68px; flex: none; background: #e9eaec; display: flex; align-items: center; font: 28px Roboto, sans-serif; color: #2b3041; padding: 0 42px 0 39px; white-space: nowrap; }
.pageno { width: 281px; }
.hires { margin-left: auto; font-weight: 500; letter-spacing: .1px; }
.toggle { width: 138px; height: 44px; margin: 4px 0 0 10px; border-radius: 22px; background: #3e78b8; color: #fff; display: flex; align-items: center; justify-content: space-between; padding: 0 6px 0 35px; }
.toggle i { width: 33px; height: 33px; border-radius: 50%; background: #fff; }
.zoom { margin-left: 24px; overflow: visible; }

/* dock */
.dock { width: 1696px; height: 112px; margin: 4px auto 0; flex: none; position: relative; border-radius: 40px; border: 2px solid rgba(255,200,150,.45); padding: 15px 0 0 15px; display: flex; align-items: flex-start; gap: 22px;
  background: linear-gradient(90deg, #ef955c 0, #efa156 250px, #ee8a58 470px, #f08a5a 560px, #ec9a58 720px, #f0905a 900px, #f47e5a 1180px, #f47858 1350px, #f2885a 1500px, #f39b58 1696px); box-shadow: 0 0 80px rgba(0,0,0,.3); }
.app { width: 72px; height: 93px; display: flex; flex-direction: column; align-items: center; position: relative; }
.app svg { filter: drop-shadow(0 1px 2px rgba(0,0,0,.3)); overflow: visible; }
.app.on::after { content: ""; width: 8px; height: 8px; border-radius: 50%; background: #7c1c00; margin: auto 0 3px; }
.app svg[height="80"] { margin-top: -3px; margin-bottom: -4px; }
.petals rect { mix-blend-mode: multiply; }
.rule { width: 2px; height: 84px; margin-top: -3px; background: #c0492c; opacity: .8; margin-left: 11px; margin-right: 9px; }
.rule.r2 { margin-left: 9px; margin-right: 14px; }
.badge { position: absolute; right: -9px; top: -10px; width: 34px; height: 34px; border-radius: 50%; background: #ee4b40; color: #fff; font-size: 19px; line-height: 34px; text-align: center; }
.n-letter { font: 700 50px "Liberation Serif", serif !important; fill: #161616; }
.docs svg { margin-top: -7px; } .docs { width: 60px; }
.docs::after { content: ""; width: 90px; height: 8px; border-radius: 4px; background: #7c1400; margin-top: 4px; flex: none; }
.trash svg { margin-top: -8px; } .trash { width: 66px; margin-left: 10px; }
```
